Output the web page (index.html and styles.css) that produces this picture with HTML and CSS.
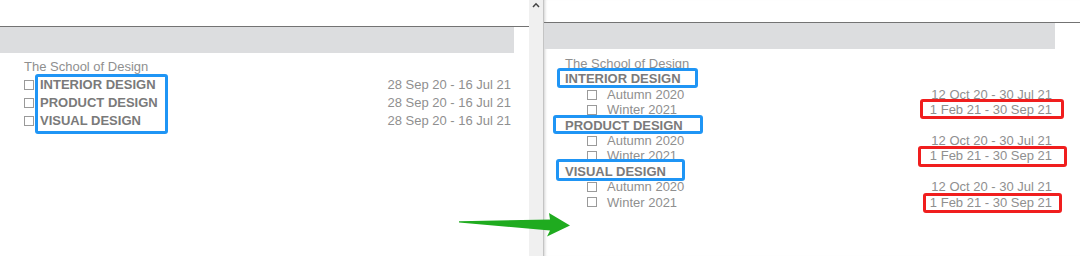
FILE: index.html
```html
<!DOCTYPE html>
<html>
<head>
<meta charset="utf-8">
<link rel="stylesheet" href="styles.css">
</head>
<body>
<div class="screen">
  <section class="panel panel-left">
    <div class="panel-top"></div>
    <div class="panel-bar"></div>
    <div class="list">
      <div class="school">The School of Design</div>
      <div class="row"><span class="cb"></span><span class="dept">INTERIOR DESIGN</span><span class="date">28 Sep 20 - 16 Jul 21</span></div>
      <div class="row"><span class="cb"></span><span class="dept">PRODUCT DESIGN</span><span class="date">28 Sep 20 - 16 Jul 21</span></div>
      <div class="row"><span class="cb"></span><span class="dept">VISUAL DESIGN</span><span class="date">28 Sep 20 - 16 Jul 21</span></div>
    </div>
  </section>

  <div class="scrollbar">
    <svg class="caret" width="8" height="6" viewBox="0 0 8 6"><path d="M1 5 L4 1.8 L7 5" fill="none" stroke="#444" stroke-width="1.5"/></svg>
  </div>

  <section class="panel panel-right">
    <div class="panel-top"></div>
    <div class="panel-bar"></div>
    <div class="list">
      <div class="school">The School of Design</div>
      <div class="group">
        <div class="dept">INTERIOR DESIGN</div>
        <div class="row sub"><span class="cb"></span><span class="term">Autumn 2020</span><span class="date">12 Oct 20 - 30 Jul 21</span></div>
        <div class="row sub"><span class="cb"></span><span class="term">Winter 2021</span><span class="date">1 Feb 21 - 30 Sep 21</span></div>
      </div>
      <div class="group">
        <div class="dept">PRODUCT DESIGN</div>
        <div class="row sub"><span class="cb"></span><span class="term">Autumn 2020</span><span class="date">12 Oct 20 - 30 Jul 21</span></div>
        <div class="row sub"><span class="cb"></span><span class="term">Winter 2021</span><span class="date">1 Feb 21 - 30 Sep 21</span></div>
      </div>
      <div class="group">
        <div class="dept">VISUAL DESIGN</div>
        <div class="row sub"><span class="cb"></span><span class="term">Autumn 2020</span><span class="date">12 Oct 20 - 30 Jul 21</span></div>
        <div class="row sub"><span class="cb"></span><span class="term">Winter 2021</span><span class="date">1 Feb 21 - 30 Sep 21</span></div>
      </div>
    </div>
  </section>

  <div class="mark blue mark-left"></div>
  <div class="mark blue mark-r1"></div>
  <div class="mark blue mark-r2"></div>
  <div class="mark blue mark-r3"></div>
  <div class="mark red mark-d1"></div>
  <div class="mark red mark-d2"></div>
  <div class="mark red mark-d3"></div>

  <svg class="arrow" width="1080" height="256" viewBox="0 0 1080 256">
    <polygon points="459,221.3 550,219.5 549,213 570,225.5 547,236.5 550,230.5 459,222.6" fill="#1fab1f"/>
  </svg>
</div>
</body>
</html>
```

FILE: styles.css
```css
html, body {
  margin: 0;
  padding: 0;
  background: #fff;
}

.screen {
  position: relative;
  width: 1080px;
  height: 256px;
  overflow: hidden;
  display: flex;
  font-family: "Liberation Sans", Arial, sans-serif;
  font-size: 13px;
  color: #8f8f8f;
}

.panel {
  display: flex;
  flex-direction: column;
}

.panel-left {
  width: 529px;
  flex: none;
}

.panel-right {
  flex: 1;
  box-shadow: inset 3px 0 3px -2px rgba(0, 0, 0, 0.18);
}

.panel-top {
  border-bottom: 1px solid #737373;
}

.panel-left .panel-top { height: 26px; }
.panel-right .panel-top { height: 22px; }

.panel-bar {
  height: 26px;
  background: #dcdddf;
}

.panel-left .panel-bar { margin-right: 15px; }
.panel-right .panel-bar { margin-right: 25px; }

.panel-left .list {
  padding: 5px 18px 0 24px;
  line-height: 18px;
}

.panel-right .list {
  padding: 7px 28px 0 21px;
  line-height: 15.4px;
}

.row {
  display: flex;
  align-items: center;
}

.panel-left .row { gap: 6px; }

.row.sub {
  padding-left: 22px;
  gap: 10px;
}

.cb {
  width: 10px;
  height: 10px;
  box-sizing: border-box;
  border: 1px solid #9a9a9a;
  background: #fff;
  flex: none;
}

.dept {
  font-weight: bold;
  color: #7a7a7a;
}

.date {
  margin-left: auto;
}

.scrollbar {
  width: 15px;
  flex: none;
  box-sizing: border-box;
  background: #f0f0f0;
  border-right: 1px solid #c4c4c4;
  display: flex;
  justify-content: center;
  align-items: flex-start;
  padding-top: 2px;
}

.caret {
  display: block;
}

.mark {
  position: absolute;
  box-sizing: border-box;
  border-radius: 3px;
  border: 3px solid;
}

.blue { border-color: #1f95f5; }
.red { border-color: #f01e1e; }

.mark-left { left: 35px; top: 74px; width: 133px; height: 60px; }
.mark-r1 { left: 557px; top: 68px; width: 141px; height: 20px; }
.mark-r2 { left: 553px; top: 115px; width: 150px; height: 19px; }
.mark-r3 { left: 556px; top: 159px; width: 129px; height: 22px; }
.mark-d1 { left: 920px; top: 99px; width: 144px; height: 20px; }
.mark-d2 { left: 918px; top: 146px; width: 149px; height: 21px; }
.mark-d3 { left: 923px; top: 193px; width: 139px; height: 20px; }

.arrow {
  position: absolute;
  left: 0;
  top: 0;
  pointer-events: none;
}
```
